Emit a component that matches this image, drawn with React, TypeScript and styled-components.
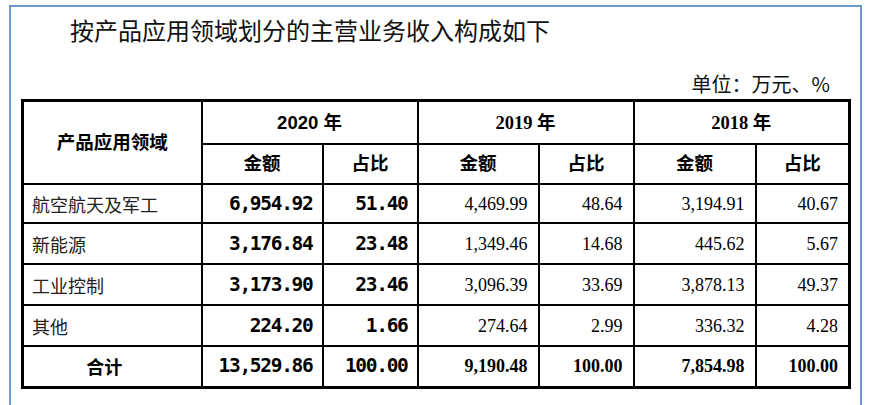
import React from "react";
import styled, { createGlobalStyle } from "styled-components";

const Global = createGlobalStyle`
  html, body { margin: 0; padding: 0; background: #ffffff; overflow: hidden; }
  body { font-family: "Noto Sans CJK SC", sans-serif; color: #000; }
`;

const Frame = styled.div`
  margin: 5px 0 0 9px;
  width: 853px;
  height: 400px;
  box-sizing: border-box;
  border: 2px solid #6f98d0;
  border-bottom: none;
  padding: 8px 0 0 10px;
`;

const Title = styled.div`
  margin-left: 49px;
  font-family: "Noto Sans CJK SC", serif;
  font-size: 24px;
  line-height: 30px;
  color: #111;
`;

const Unit = styled.div`
  width: 830px;
  box-sizing: border-box;
  margin-top: 27px;
  padding-right: 21px;
  text-align: right;
  font-family: "Noto Sans CJK SC", serif;
  font-size: 20px;
  line-height: 24px;
  color: #111;
`;

const Table = styled.table`
  margin-top: 3px;
  width: 830px;
  border-collapse: collapse;
  table-layout: fixed;
  border: 3px solid #000;
`;

const HeadCell = styled.th<{ $serif?: boolean; $h?: number }>`
  border: 2px solid #000;
  height: ${(p) => p.$h ?? 38}px;
  padding: 0;
  text-align: center;
  vertical-align: middle;
  font-family: ${(p) =>
    p.$serif
      ? '"Liberation Serif", "Noto Sans CJK SC", serif'
      : '"Liberation Sans", "Noto Sans CJK SC", sans-serif'};
  font-weight: 700;
  font-size: 18.5px;
  line-height: 22px;
  color: #000;
`;

const LabelCell = styled.td<{ $total?: boolean }>`
  border: 2px solid #000;
  padding: 0 ${(p) => (p.$total ? "16px" : "0")} 0 ${(p) => (p.$total ? "0" : "8px")};
  text-align: ${(p) => (p.$total ? "center" : "left")};
  vertical-align: middle;
  font-family: "Noto Sans CJK SC", sans-serif;
  font-weight: ${(p) => (p.$total ? 700 : 400)};
  font-size: 18px;
  line-height: 22px;
  color: ${(p) => (p.$total ? "#000" : "#222")};
`;

const MonoNum = styled.td`
  border: 2px solid #000;
  padding: 0 9px 0 0;
  text-align: right;
  vertical-align: middle;
  font-family: "DejaVu Sans Mono", monospace;
  font-weight: 700;
  font-size: 19.5px;
  line-height: 22px;
  letter-spacing: -1.3px;
  color: #000;
`;

const SerifNum = styled.td<{ $bold?: boolean }>`
  border: 2px solid #000;
  padding: 0 10px 0 0;
  text-align: right;
  vertical-align: middle;
  font-family: "Liberation Serif", serif;
  font-weight: ${(p) => (p.$bold ? 700 : 400)};
  font-size: 18px;
  line-height: 22px;
  color: #000;
`;

const Row = styled.tr<{ $h: number }>`
  height: ${(p) => p.$h}px;
`;

type R = {
  label: string;
  a: string;
  b: string;
  c: string;
  d: string;
  e: string;
  f: string;
  h: number;
  total?: boolean;
};

const rows: R[] = [
  { label: "航空航天及军工", a: "6,954.92", b: "51.40", c: "4,469.99", d: "48.64", e: "3,194.91", f: "40.67", h: 39 },
  { label: "新能源", a: "3,176.84", b: "23.48", c: "1,349.46", d: "14.68", e: "445.62", f: "5.67", h: 41 },
  { label: "工业控制", a: "3,173.90", b: "23.46", c: "3,096.39", d: "33.69", e: "3,878.13", f: "49.37", h: 41 },
  { label: "其他", a: "224.20", b: "1.66", c: "274.64", d: "2.99", e: "336.32", f: "4.28", h: 41 },
  { label: "合计", a: "13,529.86", b: "100.00", c: "9,190.48", d: "100.00", e: "7,854.98", f: "100.00", h: 41, total: true },
];

const widths = [179, 121, 95, 121, 95, 122, 94];

export default function App() {
  return (
    <>
      <Global />
      <Frame>
        <Title>按产品应用领域划分的主营业务收入构成如下</Title>
        <Unit>单位：万元、%</Unit>
        <Table>
          <colgroup>
            {widths.map((w, i) => (
              <col key={i} style={{ width: w }} />
            ))}
          </colgroup>
          <thead>
            <tr>
              <HeadCell rowSpan={2} $h={41}>产品应用领域</HeadCell>
              <HeadCell colSpan={2} $h={41}>2020 年</HeadCell>
              <HeadCell colSpan={2} $serif $h={41}>2019 年</HeadCell>
              <HeadCell colSpan={2} $serif $h={41}>2018 年</HeadCell>
            </tr>
            <tr>
              <HeadCell>金额</HeadCell>
              <HeadCell>占比</HeadCell>
              <HeadCell>金额</HeadCell>
              <HeadCell>占比</HeadCell>
              <HeadCell>金额</HeadCell>
              <HeadCell>占比</HeadCell>
            </tr>
          </thead>
          <tbody>
            {rows.map((r) => (
              <Row key={r.label} $h={r.h}>
                <LabelCell $total={r.total}>{r.label}</LabelCell>
                <MonoNum>{r.a}</MonoNum>
                <MonoNum>{r.b}</MonoNum>
                <SerifNum $bold={r.total}>{r.c}</SerifNum>
                <SerifNum $bold={r.total}>{r.d}</SerifNum>
                <SerifNum $bold={r.total}>{r.e}</SerifNum>
                <SerifNum $bold={r.total}>{r.f}</SerifNum>
              </Row>
            ))}
          </tbody>
        </Table>
      </Frame>
    </>
  );
}
